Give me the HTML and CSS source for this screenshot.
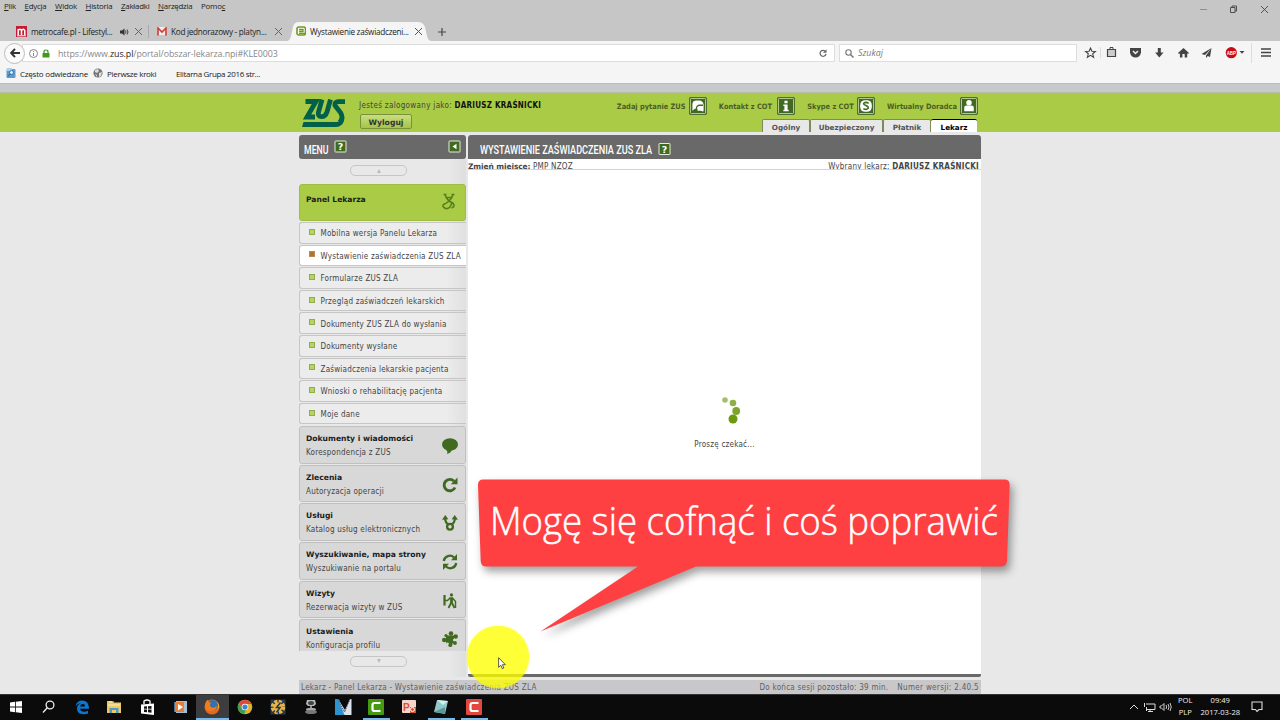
FILE: index.html
```html
<!DOCTYPE html>
<html lang="pl">
<head>
<meta charset="utf-8">
<title>Wystawienie zaświadczenia ZUS ZLA</title>
<link rel="stylesheet" href="styles.css">
</head>
<body>
<div class="screen">
  <header class="chrome">
    <div class="menubar">
      <nav class="menus"><span><u>P</u>lik</span><span><u>E</u>dycja</span><span><u>W</u>idok</span><span><u>H</u>istoria</span><span><u>Z</u>akładki</span><span><u>N</u>arzędzia</span><span>Pomo<u>c</u></span></nav>
      <svg class="winctl" width="66" height="12" viewBox="0 0 66 12" fill="none" stroke="#444" stroke-width=".9"><path d="M0 6.500h7" stroke="#888"/><path d="M30.500 4.500h4.500v5h-4.500zM32 4.500V3h4.500v5H35M61 3l7 7M68 3l-7 7" /></svg>
    </div>
    <div class="tabs">
      <div class="tab tab-a">
        <svg width="11" height="11" viewBox="0 0 11 11"><path fill="#c51b35" d="M0 0h11v11H0z"/><path d="M2.200 9V3v1.500Q4 2 5.500 4.500V9 4.500Q7.500 2 8.800 4.500V9" fill="none" stroke="#fff" stroke-width="1.500"/><path d="M1 9.800h9" stroke="#fff"/></svg>
        <span class="tab-title w82">metrocafe.pl - Lifestyl...</span>
        <svg width="9" height="8" viewBox="0 0 9 8"><path d="M0 2.500h2L4.500.5v7L2 5.500H0z" fill="#333"/><path d="M5.500 2.500q1 1.500 0 3M7 1.500q2 2.500 0 5" fill="none" stroke="#333" stroke-width=".9"/></svg>
        <svg class="close" width="7" height="7" viewBox="0 0 7 7"><path d="M0 0l7 7M7 0L0 7" stroke="#666"/></svg>
      </div>
      <div class="tab tab-b">
        <svg width="10" height="9" viewBox="0 0 10 9"><path fill="#eee" d="M0 0h10v8H0z"/><path d="M1 8.500V1l4 4 4-4v7.500" fill="none" stroke="#d23f36" stroke-width="1.700"/></svg>
        <span class="tab-title w96">Kod jednorazowy - platyn...</span>
        <svg class="close" width="7" height="7" viewBox="0 0 7 7"><path d="M0 0l7 7M7 0L0 7" stroke="#666"/></svg>
      </div>
      <div class="tab tab-active">
        <svg class="tab-shape" width="144" height="19" viewBox="0 0 144 19"><path d="M0 19Q3 18.500 4 14L6 5Q7 0 12 0H131Q136 0 138 5l2 9q1 4.500 4 5z" fill="#f5f5f5"/></svg>
        <svg class="over" width="10" height="11" viewBox="0 0 10 11"><rect x="1" y="1" width="8.500" height="8" rx="2" fill="#fff" stroke="#6f9a1c" stroke-width="1.600"/><path d="M3 3.500h4v2H3M3 7.300h6" fill="none" stroke="#6f9a1c" stroke-width="1.300"/></svg>
        <span class="tab-title over w97">Wystawienie zaświadczeni...</span>
        <svg class="close over" width="7" height="7" viewBox="0 0 7 7"><path d="M0 0l7 7M7 0L0 7" stroke="#555"/></svg>
      </div>
      <svg class="newtab" width="8" height="8" viewBox="0 0 8 8"><path d="M4 0v8M0 4h8" stroke="#444" stroke-width="1.200"/></svg>
    </div>
    <div class="navbar">
      <div class="back"><svg width="10" height="10" viewBox="0 0 10 10"><path d="M5 .8L1.200 5 5 9.200M1.500 5H10" fill="none" stroke="#333" stroke-width="2"/></svg></div>
      <div class="url">
        <svg width="9" height="9" viewBox="0 0 9 9" fill="none" stroke="#777" stroke-width=".9"><circle cx="4.500" cy="4.500" r="4"/><path d="M4.500 4v3M4.500 2v1"/></svg>
        <svg class="lock" width="8" height="9" viewBox="0 0 8 9"><path d="M2 4.500V3q0-2 2-2t2 2v1.500" fill="none" stroke="#3f9a1c" stroke-width="1.200"/><rect x=".5" y="4" width="7" height="4.500" rx=".6" fill="#3f9a1c"/></svg>
        <span class="address">https://www.<b>zus.pl</b>/portal/obszar-lekarza.npi#KLE0003</span>
        <svg class="reload" width="8" height="8" viewBox="0 0 8 8"><path d="M6.500 2.500A3 3 0 1 0 7 5" fill="none" stroke="#666" stroke-width="1.200"/><path d="M7.500.3v3.500H4z" fill="#666"/></svg>
      </div>
      <div class="search"><svg width="9" height="9" viewBox="0 0 9 9"><circle cx="3.500" cy="3.500" r="2.700" fill="none" stroke="#777" stroke-width="1.100"/><path d="M5.500 5.500L8.500 8.500" stroke="#777" stroke-width="1.500"/></svg><i>Szukaj</i></div>
      <svg class="tools" width="194" height="22" viewBox="1082 43 194 22" fill="#444">
        <path d="M1090.500 49l1.400 3.200 3.500.3-2.700 2.300.9 3.400-3.100-1.900-3.100 1.900.9-3.400-2.700-2.300 3.500-.3z" fill="none" stroke="#444" stroke-width="1.100"/>
        <path d="M1100.500 48v11M1251.500 44v20" stroke="#ddd"/>
        <path d="M1107.500 50.500h8v7h-8z" fill="#ccc" stroke="#444" stroke-width="1.200"/><path d="M1110 50v-1.500h3V50" fill="none" stroke="#444"/>
        <path d="M1130 49h11v4.500q-1 5-5.500 5t-5.500-5z"/><path d="M1133 52l2.500 2.500L1138 52" fill="none" stroke="#f5f5f5" stroke-width="1.400"/>
        <path d="M1157.800 49h3v4.500h2.700l-4.200 5-4.200-5h2.700z"/>
        <path d="M1183.500 49l5.500 5-1 1-.8-.8v4.300h-2.500V55h-2.300v3.500h-2.500v-4.300l-.9.800-1-1z"/>
        <path d="M1211.500 49l-10 6 3.500 1zM1211.500 49l-5.500 7.500v2.500l1.800-1.900 2.200.9z"/>
        <circle cx="1231.300" cy="53.700" r="5.600" fill="#c70d13"/><text x="1226.700" y="56" font-size="5.500" font-weight="700" fill="#fff" textLength="9.200" lengthAdjust="spacingAndGlyphs">ABP</text>
        <path d="M1239.500 52h5l-2.500 2.700z"/>
        <path d="M1261 49.200h10v1.600h-10zM1261 52.700h10v1.600h-10zM1261 56.200h10v1.600h-10z"/>
      </svg>
    </div>
    <div class="bookmarks">
      <svg width="10" height="10" viewBox="0 0 10 10"><rect x=".5" y="1" width="9" height="9" rx="1" fill="#5c9bd0"/><path d="M1 0h5v3H1z" fill="#a9cfee"/><circle cx="5.500" cy="4.500" r="2" fill="#d7ebfb" stroke="#275f95" stroke-width=".8"/><path d="M4 6L2 8.500" stroke="#275f95"/></svg>
      <span class="bm1">Często odwiedzane</span>
      <svg width="10" height="10" viewBox="0 0 10 10"><circle cx="5" cy="5" r="4.600" fill="#777"/><path d="M2 2l3-1 1 2-2 2-2-1zM6 5l3-1-1 4-2 1zM2 6l2 1v2z" fill="#ddd"/></svg>
      <span class="bm2">Pierwsze kroki</span>
      <span class="bm3">Elitarna Grupa 2016 str...</span>
    </div>
  </header>

  <main class="page">
    <div class="topstrip"></div>
    <div class="banner">
      <div class="banner-in">
        <svg class="logo" width="45" height="28" viewBox="0 0 45 28"><g fill="none" stroke="#00604a" stroke-width="4.800"><path d="M3.500 2.500H14L5 18H13"/><path d="M20 .5L16.500 13Q15.600 17.700 19.500 17.700T25 13L28.500 .5"/><path d="M43 2.600H36Q32.500 3 33 6.500L38.500 13.500Q42 19.500 37.500 23.500"/></g><path d="M1.500 23H34Q39 23 41 20L42 22Q40 28 33 28H0z" fill="#00604a"/></svg>
        <div class="who"><div class="logged"><span>Jesteś zalogowany jako:</span> <b>DARIUSZ KRAŚNICKI</b></div><div class="logout">Wyloguj</div></div>
        <div class="right">
          <div class="contacts">
            <span class="c1">Zadaj pytanie ZUS</span><svg class="sq" viewBox="0 0 17 17"><use href="#sq"/><path d="M3.200 11V7q0-3.800 3.800-3.800h2.500q4 0 4.300 4.300v5.500H12l-1-2H5.500L3.200 13z" fill="#fff"/><path d="M7 13V11q0-3.200 3.200-3.200h3" fill="none" stroke="#3f6a20" stroke-width="1.200"/><path d="M8 13v-2q0-2 2-2t3 2l.5 3-2-1z" fill="#fff"/></svg>
            <span class="c2">Kontakt z COT</span><svg class="sq sq2" viewBox="0 0 17 17"><use href="#sq"/><path d="M7 3.500h3V6H7zM6 7h4v5h1v1.500H6V12h1V8.500H6z" fill="#fff"/></svg>
            <span class="c3">Skype z COT</span><svg class="sq" viewBox="0 0 17 17"><use href="#sq"/><rect x="3" y="3" width="11" height="11" rx="4.500" fill="#fff"/><path d="M11 6Q8.500 4.300 6.500 5.700C5 8 11.500 8 10.700 10.500Q9 12.700 6 11" fill="none" stroke="#3f6a20" stroke-width="1.500"/></svg>
            <span class="c4">Wirtualny Doradca</span><svg class="sq" viewBox="0 0 17 17"><use href="#sq"/><circle cx="8.500" cy="5.500" r="2.600" fill="#fff"/><path d="M4 13.500V10q0-2 2-2h5q2 0 2 2v3.500z" fill="#fff"/></svg>
          </div>
          <div class="ptabs"><span class="p1">Ogólny</span><span class="p2">Ubezpieczony</span><span class="p3">Płatnik</span><span class="p4">Lekarz</span></div>
        </div>
      </div>
    </div>
    <svg width="0" height="0" class="defs"><defs><g id="sq"><rect x=".5" y=".5" width="16" height="16" rx="1.500" fill="#3f6a20" stroke="#455d2e"/><rect x="1.300" y="1.300" width="14.400" height="14.400" rx="1" fill="none" stroke="#dce9b8" stroke-width=".8"/></g>
      <g id="help"><rect x=".5" y=".5" width="11" height="11" rx=".5" fill="#3f6a20" stroke="#e3efd3"/></g></defs></svg>
    <div class="columns">
      <aside class="side">
        <div class="head"><svg width="167" height="24"><text x="5" y="18.500" class="title" textLength="24.500" lengthAdjust="spacingAndGlyphs">MENU</text><use href="#help" x="35.500" y="5.500"/><text x="38.800" y="15" class="q">?</text><use href="#help" x="149.500" y="5.500"/><path d="M157.500 8.800v5.400l-4-2.700z" fill="#fff"/></svg></div>
        <div class="scroll up"><i></i></div>
        <div class="panel"><b>Panel Lekarza</b><svg width="14" height="17" viewBox="0 0 14 17"><path d="M1.500 1.500h3M9.500 1.500h3M3 1.500l1.500 3.500L7 8l2.500-3L11 1.500M4.500 4.500h5M7 8q-2 2-4.500 3T1.500 14t4 1.500 3.500-3.500 2-1.800 1 2.500-2.500 2.300M7 8l3.500 2" fill="none" stroke="#55801a" stroke-width="1.600"/></svg></div>
        <ul class="items">
          <li><span>Mobilna wersja Panelu Lekarza</span></li>
          <li class="on"><span>Wystawienie zaświadczenia ZUS ZLA</span></li>
          <li><span>Formularze ZUS ZLA</span></li>
          <li><span>Przegląd zaświadczeń lekarskich</span></li>
          <li><span>Dokumenty ZUS ZLA do wysłania</span></li>
          <li><span>Dokumenty wysłane</span></li>
          <li><span>Zaświadczenia lekarskie pacjenta</span></li>
          <li><span>Wnioski o rehabilitację pacjenta</span></li>
          <li><span>Moje dane</span></li>
        </ul>
        <div class="groups">
          <div class="group"><div><b>Dokumenty i wiadomości</b><span>Korespondencja z ZUS</span></div><svg viewBox="0 0 16 16"><ellipse cx="8" cy="6.500" rx="8" ry="6.200" fill="#3f6a20"/><path d="M4 11.500q2 2 1 4.500 4-1 5-4.500z" fill="#3f6a20"/></svg></div>
          <div class="group"><div><b>Zlecenia</b><span>Autoryzacja operacji</span></div><svg viewBox="0 0 16 16"><path d="M12 4.200A5.700 5.700 0 1 0 13 10.500" fill="none" stroke="#3f6a20" stroke-width="2.900"/><path d="M15.500.5v6.700H8.800z" fill="#3f6a20"/></svg></div>
          <div class="group"><div><b>Usługi</b><span>Katalog usług elektronicznych</span></div><svg viewBox="0 0 16 16"><path d="M3.300 2.500V5q.2 2.500 3 4.500M12.700 2.500V5q-.2 2.500-3 4.500" fill="none" stroke="#3f6a20" stroke-width="2.300"/><circle cx="8" cy="11.800" r="2.900" fill="none" stroke="#3f6a20" stroke-width="2.300"/><path d="M3.300 0L6.300 4.200 0 4.800zM12.700 0l-3 4.200 6.300.6z" fill="#3f6a20"/></svg></div>
          <div class="group"><div><b>Wyszukiwanie, mapa strony</b><span>Wyszukiwanie na portalu</span></div><svg viewBox="0 0 16 16"><path d="M1.800 7A6 6 0 0 1 12 3.500M14.200 9A6 6 0 0 1 4 12.500" fill="none" stroke="#3f6a20" stroke-width="2.300"/><path d="M15 0v6.300H9zM1 16V9.700h6z" fill="#3f6a20"/></svg></div>
          <div class="group"><div><b>Wizyty</b><span>Rezerwacja wizyty w ZUS</span></div><svg viewBox="0 0 16 16" fill="none" stroke="#3f6a20"><circle cx="9.500" cy="1.900" r="1.600" fill="#3f6a20" stroke="none"/><path d="M2.500 2v10.500" stroke-width="2.200"/><path d="M3 7.500h2.500L8 5h2.500l3 3.500M13.500 8v7" stroke-width="1.400"/><path d="M9.500 5v5" stroke-width="2.800"/><path d="M9 10l-2.500 5M10 10l2.500 5" stroke-width="1.800"/></svg></div>
          <div class="group"><div><b>Ustawienia</b><span>Konfiguracja profilu</span></div><svg viewBox="0 0 16 16"><path d="M4 4.500h8v8H4z" fill="#3f6a20"/><g fill="#3f6a20"><circle cx="9" cy="2.500" r="2.300"/><circle cx="13.700" cy="5.500" r="2.200"/><circle cx="2.200" cy="9" r="2.200"/><circle cx="8.300" cy="13.700" r="2.200"/><circle cx="13" cy="12" r="1.900"/><circle cx="4" cy="4.500" r="1.600"/></g><g fill="#d8d8d8"><circle cx="12.200" cy="9" r="1.200"/><circle cx="5.500" cy="12.800" r="1.300"/></g></svg></div>
        </div>
        <div class="scroll down"><i></i></div>
      </aside>
      <section class="content">
        <div class="head"><svg width="513" height="24"><text x="12" y="18.500" class="title" textLength="172" lengthAdjust="spacingAndGlyphs">WYSTAWIENIE ZAŚWIADCZENIA ZUS ZLA</text><use href="#help" x="190.500" y="8"/><text x="193.800" y="17.500" class="q">?</text></svg></div>
        <div class="place"><span class="pl"><b>Zmień miejsce:</b> PMP NZOZ</span><span class="doc">Wybrany lekarz: <b>DARIUSZ KRAŚNICKI</b></span></div>
        <div class="work">
          <svg class="spin" width="24" height="30" viewBox="0 0 24 30"><circle cx="5" cy="5" r="2.800" fill="#a3bf6c"/><circle cx="13" cy="8" r="3.300" fill="#8fb045"/><circle cx="16.200" cy="16" r="3.900" fill="#7da52c"/><circle cx="13" cy="24" r="4.500" fill="#6c9a0c"/></svg>
          <span class="wait">Proszę czekać...</span>
        </div>
      </section>
    </div>
    <div class="status"><span class="s1">Lekarz - Panel Lekarza - Wystawienie zaświadczenia ZUS ZLA</span><span class="s2">Do końca sesji pozostało: 39 min.</span><span class="s3">Numer wersji: 2.40.5</span></div>
  </main>

  <footer class="taskbar">
    <div class="apps">
      <span><svg viewBox="0 0 20 20"><path fill="#fff" d="M4 5.500l5-.7v4.800H4zM9.800 4.700L16 4v5.600H9.800zM4 10.400h5v4.800l-5-.7zM9.800 10.400H16V16l-6.200-.7z"/></svg></span>
      <span><svg viewBox="0 0 20 20" fill="none" stroke="#eee" stroke-width="1.300"><circle cx="11" cy="8" r="3.900"/><path d="M8.100 11L4 15.500"/></svg></span>
      <span><svg viewBox="0 0 20 20"><path d="M3.500 9Q5 3.500 10.300 3.500q6 0 6.700 7v1.300H8q.5 3 4 3 2.500 0 4-1v2.700Q14 17.500 11 17.300 5 17 5 11.500q0-4 4-5.500Q5.500 6.500 3.500 9zm4.700.4h4.900q0-2.400-2.400-2.400T8.200 9.400z" fill="#0c76d0"/></svg></span>
      <span><svg viewBox="0 0 20 20"><path d="M3 4h5l1 1.500h8V16H3z" fill="#eec867"/><path d="M5 5h5M4 8h12" stroke="#fff0b5"/><path d="M5.500 16v-5h9v5h-2.500v-3H8v3z" fill="#4b9dc6"/></svg></span>
      <span><svg viewBox="0 0 20 20"><path d="M4 7.500l13-1V18L4 16.500z" fill="#fff"/><path d="M7 7V4q3-2 6 0v3" fill="none" stroke="#fff" stroke-width="1.300"/><path d="M7 9.500l3-.2v2.500H7zM11 9.200l3.500-.2v2.800H11zM7 12.600h3v2.600l-3-.3zM11 12.600h3.500v3.100l-3.500-.4z" fill="#111"/></svg></span>
      <span><svg viewBox="0 0 20 20"><path d="M4 5h10v10H4z" fill="#447397"/><path d="M6 4h11v12H6z" fill="#a7bfd3"/><path d="M5 5h9v10H5z" fill="#e47f35"/><path d="M8 7l5 3-5 3.500z" fill="#fff"/></svg></span>
      <span class="active"><svg viewBox="0 0 20 20"><circle cx="10" cy="10" r="7.500" fill="#e66a19"/><circle cx="10.500" cy="8.300" r="5.300" fill="#2e72b3"/><path d="M3 8q1-5 3-5 0 2 3 3Q7 8 9 10t6-1q-1 5-6 5-6 0-6-6z" fill="#f47a1b"/><path d="M14 4q4 4 1 9l2-3q0-4-3-6z" fill="#ffc02e"/></svg></span>
      <span><svg viewBox="0 0 20 20"><circle cx="10" cy="10" r="7.300" fill="#ddb52b"/><path d="M3.700 6.500A7.300 7.300 0 0 1 16.500 7H10L8 12z" fill="#dd4a3c"/><path d="M3.700 6.500L7.500 12.500 11 13l-2 4.300A7.300 7.300 0 0 1 3.700 6.500z" fill="#3a9c58"/><circle cx="10" cy="10" r="3.300" fill="#fff"/><circle cx="10" cy="10" r="2.600" fill="#3f82dc"/></svg></span>
      <span><svg viewBox="0 0 20 20"><path d="M2.500 2.500h15v15h-15z" fill="#26384c"/><circle cx="10" cy="10" r="5.500" fill="none" stroke="#e9b545" stroke-width="3.500" stroke-dasharray="3 1.320"/><circle cx="10" cy="10" r="4.500" fill="#e9b545"/><path d="M12.500 5.500L8.500 10.500h3.500L8.500 15.500" fill="none" stroke="#26384c" stroke-width="1.500"/></svg></span>
      <span><svg viewBox="0 0 20 20"><path d="M6 3h8l1 4-2 2H7L5 7z" fill="#b7bbbc"/><ellipse cx="10" cy="6" rx="3" ry="2" fill="#444"/><path d="M9 9h2v3H9z" fill="#888"/><ellipse cx="10" cy="12.500" rx="5" ry="1.800" fill="#aaa"/><ellipse cx="10" cy="15" rx="6" ry="2" fill="#777"/></svg></span>
      <span><svg viewBox="0 0 20 20"><path d="M2 2h4l6 16H2z" fill="#2c93cf"/><path d="M5 2l7 11 5-11h1.500v16h-7z" fill="#dce4ea"/><path d="M5 2l6.500 13L17 2" fill="none" stroke="#335" stroke-width="1" stroke-dasharray="1.500 1"/></svg></span>
      <span class="run"><svg viewBox="0 0 20 20"><rect x="2" y="2" width="16" height="16" rx="1" fill="#459a11"/><path d="M14.500 6H8.500Q6.500 6 6.500 8v4q0 2 2 2h6" fill="none" stroke="#fff" stroke-width="2.200"/></svg></span>
      <span><svg viewBox="0 0 20 20"><rect x="3" y="3" width="14" height="13" rx="1" fill="#f3d5cc"/><path d="M11 10h6v6h-6z" fill="#d35430"/><text x="4" y="14" class="pp">P</text><circle cx="13.500" cy="12.500" r="2" fill="none" stroke="#fff"/></svg></span>
      <span class="run"><svg viewBox="0 0 20 20"><path d="M6 3l11 1-3 13-11-2z" fill="#8dc8cb"/><path d="M6 3l11 1-5 4z" fill="#d4eeee"/><path d="M3 15l11-5v6.500z" fill="#5c9699"/></svg></span>
      <span class="run"><svg viewBox="0 0 20 20"><rect x="2" y="2" width="16" height="16" rx="1" fill="#e2483d"/><path d="M14.500 6H8.500Q6.500 6 6.500 8v4q0 2 2 2h6" fill="none" stroke="#fff" stroke-width="2.200"/></svg></span>
    </div>
    <div class="tray">
      <svg width="44" height="14" viewBox="0 0 44 14" fill="none" stroke="#ddd"><path d="M1 9l4-4 4 4"/><path d="M17 4h9v5.500h-8M21 9.500v2M19 11.500h5M15.500 3v4M17.500 7v4"/><path d="M31 6h1.500L35 3.500v7L32.500 8H31zM37 5q1.300 2 0 4M39 4q2 3 0 6M41 3q2.500 4 0 8" stroke-width=".9"/></svg>
      <div class="tcol lang"><span>POL</span><span>PLP</span></div>
      <div class="tcol clock"><span>09:49</span><span>2017-03-28</span></div>
      <svg class="note" width="13" height="12" viewBox="0 0 13 12"><path d="M1 1h10v7.500H8l-2 2-1.500-2H1z" fill="none" stroke="#ddd" stroke-width="1.100"/></svg>
    </div>
  </footer>

  <div class="spot"></div>
  <svg class="callout" width="560" height="180" viewBox="470 470 560 180">
    <path class="bubble" d="M483 479.500H1004.500Q1009.800 479.500 1009.700 485L1007 561Q1006.500 566.500 1001 566.500H696L540.500 631.500 638 566.500H486Q481 566.500 480.700 561L478 485Q478 479.500 483 479.500z"/>
    <text x="490" y="534.500" textLength="508" lengthAdjust="spacingAndGlyphs">Mogę się cofnąć i coś poprawić</text>
  </svg>
  <svg class="cursor" width="9" height="13" viewBox="0 0 9 13"><path d="M.6.700v9.600l2.200-2 1.500 3.400 1.500-.7-1.400-3.300h3z" fill="#fff" stroke="#333" stroke-width=".8"/></svg>
</div>
</body>
</html>
```

FILE: styles.css
```css
*, *::before, *::after { box-sizing: border-box; }
body { margin: 0; }
.screen { position: relative; width: 1280px; height: 720px; overflow: hidden; display: flex; flex-direction: column; background: #e8e8e8; font-family: "DejaVu Sans Condensed", "DejaVu Sans", sans-serif; font-stretch: condensed; font-size: 8px; letter-spacing: .22px; color: #444; white-space: nowrap; }
svg { display: block; flex: none; letter-spacing: 0; }

.chrome { height: 84px; flex: none; background: #c6c6c6; border-bottom: 1px solid #b8bcc8; font-family: "Open Sans", sans-serif; font-stretch: normal; font-size: 8.5px; letter-spacing: -.25px; color: #222; }
.menubar { display: flex; justify-content: space-between; height: 22px; padding: 0 11px 0 4px; }
.menus { display: flex; gap: 8.700px; line-height: 13px; font-size: 7.900px; }
.menus u { text-underline-offset: 1px; }
.winctl { margin-top: 3px; overflow: visible; margin-right: 3px; }
.tabs { display: flex; height: 19px; align-items: center; }
.tab { display: flex; align-items: center; height: 19px; }
.tab-title { margin-left: 4px; font-size: 8.200px; line-height: 12px; letter-spacing: -.27px; }
.tab-a { width: 149px; padding-left: 16px; border-right: 1px solid #aaa; height: 13px; }
.tab-b { width: 138px; padding-left: 8px; }
.w82 { width: 89px; }
.w96 { width: 104px; }
.w97 { width: 105px; }
.close { margin-left: 6px; }
.tab-b .close, .tab-active .close { margin-left: 0; }
.tab-active { position: relative; width: 144px; padding-left: 9px; }
.tab-shape { position: absolute; left: 0; top: 0; }
.over { position: relative; }
.newtab { margin-left: 7px; }
.navbar { display: flex; align-items: center; height: 24px; background: #f5f5f5; padding-left: 4px; }
.back { width: 21px; height: 21px; border: 1px solid #bbb; border-radius: 50%; background: #fafafa; display: grid; place-items: center; flex: none; z-index: 1; }
.url { display: flex; align-items: center; width: 813px; height: 18px; margin-left: -3px; padding-left: 6px; background: #fff; border: 1px solid #ddd; }
.lock { margin-left: 4px; }
.address { margin-left: 8px; font-size: 8.900px; letter-spacing: -.1px; color: #888; flex: 1; }
.address b { font: inherit; color: #222; }
.reload { margin-right: 7px; }
.search { display: flex; align-items: center; gap: 4px; width: 238px; height: 18px; margin-left: 4px; padding-left: 5px; background: #fff; border: 1px solid #ddd; font-size: 8.800px; letter-spacing: 0; color: #777; }
.tools { margin-left: 5px; font-family: "Liberation Sans", sans-serif; }
.bookmarks { display: flex; align-items: center; height: 18px; padding: 0 0 2px 6px; background: #f5f5f5; font-size: 8px; }
.bm1 { width: 73px; margin-left: 4px; letter-spacing: -.22px; }
.bm2 { width: 65px; margin-left: 4px; letter-spacing: -.3px; }
.bm3 { margin-left: 4px; letter-spacing: -.33px; }

.page { flex: 1; display: flex; flex-direction: column; align-items: stretch; min-height: 0; }
.topstrip { height: 9px; background: #c7c9cc; border-bottom: 1px solid #b9bdaa; flex: none; }
.banner { height: 39px; flex: none; background: #aacb46; }
.banner-in { display: flex; width: 683px; height: 39px; margin-left: 298px; }
.logo { margin: 6px 0 0 4px; }
.who { margin-left: 12px; padding-top: 6px; }
.logged { line-height: 13px; }
.logged span { letter-spacing: .32px; }
.logged b { color: #111; }
b { font-family: "DejaVu Sans", sans-serif; font-stretch: normal; }
.logged b, .doc b { font-family: "DejaVu Sans Condensed", "DejaVu Sans"; font-stretch: condensed; letter-spacing: .24px; }
.logout { width: 52px; height: 15px; margin: 2px 0 0 1px; border: 1px solid #78943a; border-radius: 2px; background: linear-gradient(#c9dd83, #a5c549); font: bold 7.700px/15px "DejaVu Sans", sans-serif; letter-spacing: 0; text-align: center; color: #333; }
.right { margin-left: auto; }
.contacts { display: flex; align-items: center; height: 26px; justify-content: flex-end; padding-right: 3px; font-weight: 700; font-size: 7.400px; letter-spacing: 0; color: #4c5e22; }
.sq { width: 18px; height: 18px; margin-left: 3px; }
.sq2 { margin-left: 5px; }
.c2, .c3, .c4 { margin-left: 12.300px; }
.ptabs { display: flex; justify-content: flex-end; height: 13px; padding-right: 4px; font: bold 7.200px/15px "DejaVu Sans", sans-serif; letter-spacing: 0; color: #555; }
.ptabs span { height: 13px; text-align: center; background: #e8e8e8; border: 1px solid #7d8a5a; border-bottom: 0; border-radius: 2px 2px 0 0; }
.p1 { width: 48px; } .p2 { width: 73px; } .p3 { width: 48px; }
.ptabs .p4 { width: 46px; background: #fff; color: #000; border-color: #000; border-width: 1px 0 0; }
.defs { position: absolute; }

.columns { display: flex; gap: 2px; width: 682px; height: 545px; flex: none; margin-left: 299px; padding-top: 3px; }
.side { width: 167px; display: flex; flex-direction: column; background: linear-gradient(90deg, #e8e8e8 90%, #dedede); }
.head { height: 24px; flex: none; background: #696969; border-radius: 3px 3px 0 0; color: #fff; }
.side .head { border-radius: 3px; }
.title { font: 500 13.700px Roboto, sans-serif; fill: #fff; }
.q { font: bold 9.500px "DejaVu Sans", sans-serif; fill: #fff; }
.scroll { width: 57px; height: 11px; margin-left: 51.400px; flex: none; border: 1px solid #c6c6c6; border-radius: 5px; display: grid; place-items: center; }
.up { margin-top: 6px; }
.down { margin-top: 5px; }
.scroll i { border: 2px solid transparent; }
.up i { border-top: 0; border-bottom: 4px solid #bbb; }
.down i { border-bottom: 0; border-top: 4px solid #bbb; }
.panel { display: flex; height: 37px; flex: none; margin-top: 8px; padding: 8px 9px 0 6px; justify-content: space-between; background: #aacb46; border: 1px solid #9ebc46; border-radius: 3px; color: #1d1d1d; }
.panel b, .group b { font-size: 7.600px; line-height: 12px; letter-spacing: 0; }
.panel b { line-height: 14px; }
.items { list-style: none; margin: 1px 0 0; padding: 0; flex: none; }
.items li { display: flex; align-items: center; height: 21.600px; margin-bottom: 1px; padding: 2px 0 0 9px; background: linear-gradient(90deg, #ececec 88%, #e0e0e0); border: 1px solid #c6c6c6; border-right: 0; border-radius: 3px 0 0 3px; }
.items li::before { content: ""; width: 6px; height: 6px; margin: -4px 5.500px 0 0; border: 1px solid #91ac4b; background: #b6d36a; }
.items .on { background: #fff; }
.items .on::before { background: #b4702c; border-color: #b88a55; }
.groups { height: 225.500px; flex: none; overflow: hidden; padding-top: .5px; }
.group { display: flex; justify-content: space-between; height: 37.700px; margin-bottom: 1px; padding: 6px 7px 0 6px; background: #d8d8d8; border: 1px solid #c0c0c0; border-radius: 3px; }
.group b { display: block; color: #1d1d1d; }
.group span { display: block; line-height: 16px; }
.group svg { width: 16px; height: 16px; margin-top: 5px; }
.content { width: 513px; display: flex; flex-direction: column; background: #fff; border-bottom: 3px solid #696969; border-radius: 3px 3px 2px 2px; }
.place { display: flex; justify-content: space-between; height: 11px; padding: 1px 2px 0 0; line-height: 13px; border-bottom: 1px solid #d3d3d3; overflow: hidden; }
.pl b { font-size: 7.500px; letter-spacing: -.1px; }
.work { flex: 1; display: flex; flex-direction: column; align-items: center; padding-top: 225px; }
.spin { margin-left: 14px; }
.wait { margin-top: 14px; line-height: 12px; }
.status { display: flex; width: 682px; flex: 1; margin: 3px 0 0 299px; padding: 0 2px; background: #c8c8ca; line-height: 16px; color: #606060; }
.status .s1 { letter-spacing: .26px; }
.s2 { margin-left: auto; letter-spacing: .25px; }
.s3 { margin-left: 9px; letter-spacing: .32px; }

.taskbar { height: 26px; flex: none; display: flex; justify-content: space-between; background: #0b0b0c; border-top: 1px solid #333; }
.apps { display: flex; }
.apps > span { width: 32.700px; height: 25px; display: grid; place-items: center; position: relative; }
.apps svg { width: 20px; height: 20px; margin-top: -1px; }
.apps .active { background: #3d3d3f; box-shadow: inset 0 -2px #76b9ed; }
.run::after { content: ""; position: absolute; bottom: 0; left: 3px; width: 27px; height: 2px; background: #76b9ed; }
.pp { font: bold 10px "Liberation Sans", sans-serif; fill: #d35430; }
.tray { display: flex; align-items: center; width: 151px; padding-bottom: 2px; color: #eee; font: 7.600px/11.500px "Open Sans", sans-serif; letter-spacing: 0; }
.tcol { display: flex; flex-direction: column; align-items: center; }
.lang { margin-left: 5px; }
.clock { margin-left: 8px; }
.note { margin-left: 11px; }

.spot { position: absolute; left: 467px; top: 626px; width: 62px; height: 62px; border-radius: 50%; background: #ffff00; opacity: .78; box-shadow: 0 0 2px #ffff00; }
.callout { position: absolute; left: 470px; top: 470px; overflow: visible; }
.bubble { fill: #ff4042; filter: drop-shadow(3px 5px 4px rgba(0, 0, 0, .38)); }
.callout text { font: 300 38px "Open Sans", sans-serif; fill: #fff; stroke: #fff; stroke-width: .5px; }
.cursor { position: absolute; left: 498px; top: 657px; }
```
